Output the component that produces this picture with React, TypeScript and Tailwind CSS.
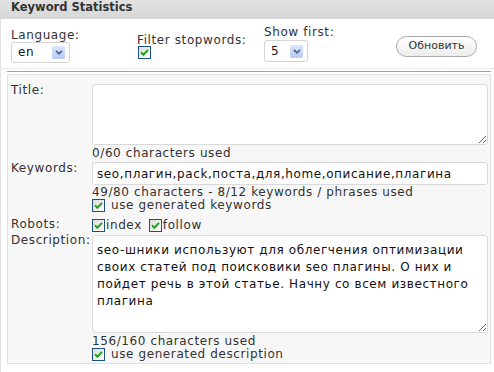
import React from "react";

// XP-style checkbox, always ticked in this screenshot
function Tick() {
  return (
    <span className="flex h-[13px] w-[13px] shrink-0 items-center justify-center border border-[#1c5180] bg-linear-to-br from-[#dcdcd7] to-white">
      <svg width="9" height="9" viewBox="0 0 9 9">
        <path d="M1 4.3 L3.4 6.7 L8 1.9" fill="none" stroke="#21a121" strokeWidth="2" />
      </svg>
    </span>
  );
}

function Dropdown({ value, className }: { value: string; className: string }) {
  return (
    <div
      className={`flex items-center justify-between rounded-[3px] border border-[#d4d4d4] bg-white pl-[6px] pr-[4px] ${className}`}
    >
      <span className="leading-[13px] text-[#111]">{value}</span>
      <span className="flex h-[13px] w-[13px] items-center justify-center rounded-[2px] bg-linear-to-b from-[#dde6fc] to-[#b5c8f5]">
        <svg width="8" height="5" viewBox="0 0 8 5">
          <path d="M1 0.8 L4 3.8 L7 0.8" fill="none" stroke="#4d6185" strokeWidth="1.7" />
        </svg>
      </span>
    </div>
  );
}

const description =
  "seo-шники используют для облегчения оптимизации\nсвоих статей под поисковики seo плагины. О них и\nпойдет речь в этой статье. Начну со всем известного\nплагина";

export default function App() {
  return (
    <div className="h-[372px] w-[494px] overflow-hidden bg-white font-['DejaVu_Sans',sans-serif] text-[12px] tracking-[0.6px] text-[#333]">
      {/* title bar */}
      <div className="h-[19px] bg-linear-to-b from-[#e2e2e2] to-[#d7d7d7] pl-[11px] text-[11.5px] font-bold leading-[14px] tracking-normal text-[#333]">
        Keyword Statistics
      </div>

      <div className="flex h-[353px] flex-col border-l border-[#e2e2e2]">
        {/* settings */}
        <div className="flex h-[50px] shrink-0 border-b border-[#e8e8e8] pl-[10px]">
          <div className="w-[126px] pt-[10px]">
            <div className="leading-[13px]">Language:</div>
            <Dropdown value="en" className="h-[21px] w-[59px]" />
          </div>
          <div className="w-[127px] pt-[15px]">
            <div className="leading-[12px]">Filter stopwords:</div>
            <div className="pl-[1px]">
              <Tick />
            </div>
          </div>
          <div className="w-[132px] pt-[7px]">
            <div className="leading-[13px]">Show first:</div>
            <Dropdown value="5" className="mt-[1px] h-[22px] w-[44px]" />
          </div>
          <div className="pt-[17px]">
            <button className="flex h-[21px] w-[81px] items-center justify-center rounded-full border border-[#a9a9a9] bg-linear-to-b from-white to-[#ececec] text-[11px] tracking-normal text-[#333]">
              Обновить
            </button>
          </div>
        </div>

        <div className="ml-[6px] mt-[2px] h-px w-[484px] shrink-0 bg-[#a3a3a3]" />

        {/* meta panel */}
        <div className="ml-[6px] mt-[2px] w-[484px] border border-[#e1e1e1] bg-[#f7f7f7] pb-[2px] pl-[3px] pt-[8px]">
          <div className="flex">
            <div className="w-[81px] leading-[14px]">Title:</div>
            <div className="w-[396px]">
              <textarea
                readOnly
                className="mt-[1px] block h-[61px] w-full rounded-[3px] border border-[#d9d9d9] bg-white pl-[4px] pt-[6px] leading-[17px] text-[#111] outline-none"
              />
              <div className="mt-[1px] leading-[14px]">0/60 characters used</div>
            </div>
          </div>

          <div className="mt-[1px] flex">
            <div className="w-[81px] leading-[14px]">Keywords:</div>
            <div className="w-[396px]">
              <input
                readOnly
                value="seo,плагин,pack,поста,для,home,описание,плагина"
                className="mt-[1px] block h-[23px] w-full rounded-[3px] border border-[#d9d9d9] bg-white pl-[4px] text-[#111] outline-none"
              />
              <div className="mt-[1px] leading-[12px]">49/80 characters - 8/12 keywords / phrases used</div>
              <div className="flex h-[14px] items-center gap-[6px] leading-[14px]">
                <Tick />
                <span>use generated keywords</span>
              </div>
            </div>
          </div>

          <div className="mt-[5px] flex">
            <div className="w-[81px] leading-[14px]">Robots:</div>
            <div className="mt-[1px] flex h-[14px] w-[396px] items-center leading-[14px]">
              <Tick />
              <span className="ml-px">index</span>
              <span className="ml-[7px]">
                <Tick />
              </span>
              <span className="ml-px">follow</span>
            </div>
          </div>

          <div className="mt-px flex">
            <div className="w-[81px] leading-[14px]">Description:</div>
            <div className="w-[396px]">
              <textarea
                readOnly
                value={description}
                className="mt-[2px] block h-[98px] w-full rounded-[3px] border border-[#d9d9d9] bg-white pl-[4px] pt-[6px] leading-[17px] text-[#111] outline-none"
              />
              <div className="mt-[2px] leading-[12px]">156/160 characters used</div>
              <div className="flex h-[14px] items-center gap-[6px] leading-[14px]">
                <Tick />
                <span>use generated description</span>
              </div>
            </div>
          </div>
        </div>
      </div>
    </div>
  );
}
